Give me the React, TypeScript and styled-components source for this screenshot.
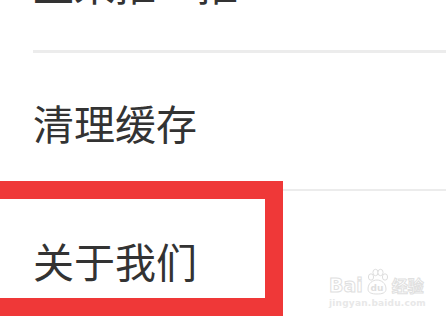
import React from "react";
import styled, { createGlobalStyle } from "styled-components";

const Global = createGlobalStyle`
  html, body { margin: 0; padding: 0; background: #ffffff; }
  body { font-family: "Noto Sans CJK SC", "Noto Sans", sans-serif; }
`;

const Page = styled.div`
  position: relative;
  width: 446px;
  height: 325px;
  overflow: hidden;
  background: #ffffff;
`;

const List = styled.div`
  display: flex;
  flex-direction: column;
  margin-top: -86px;
`;

const Row = styled.div<{ $line: number }>`
  display: flex;
  align-items: center;
  box-sizing: content-box;
  height: 134px;
  padding-top: 2px;
  margin-left: 33px;
  border-bottom: ${(p) => p.$line}px solid #ececec;
`;

const Label = styled.span`
  font-family: "Noto Sans CJK SC", "Noto Sans", sans-serif;
  font-size: 41px;
  line-height: 1;
  color: #333333;
`;

const Highlight = styled.div`
  position: absolute;
  left: -30px;
  top: 181px;
  width: 313px;
  height: 135px;
  box-sizing: border-box;
  border: 18px solid #ef3838;
  pointer-events: none;
`;

const Watermark = styled.div`
  position: absolute;
  left: 329px;
  top: 268px;
  display: flex;
  flex-direction: column;
  align-items: flex-start;
  pointer-events: none;
`;

const MarkTop = styled.div`
  display: flex;
  align-items: flex-end;
  gap: 1px;
  height: 27px;
`;

const MarkBai = styled.span`
  font-family: "DejaVu Sans", sans-serif;
  font-weight: bold;
  font-size: 19px;
  line-height: 20px;
  color: #ffffff;
  -webkit-text-stroke: 1px #e0e0e0;
`;

const MarkCn = styled.span`
  font-family: "Noto Sans CJK SC", sans-serif;
  font-weight: bold;
  font-size: 16px;
  line-height: 20px;
  color: #ffffff;
  -webkit-text-stroke: 1px #e0e0e0;
  margin-left: 1px;
`;

const MarkUrl = styled.span`
  font-family: "DejaVu Sans", sans-serif;
  font-weight: bold;
  font-size: 9px;
  line-height: 12px;
  margin-top: 2px;
  color: #e8e8e8;
  letter-spacing: 0.2px;
`;

const Paw = () => (
  <svg width="26" height="27" viewBox="0 0 26 27">
    <g fill="#ffffff" stroke="#dedede" strokeWidth="1">
      <ellipse cx="7" cy="9" rx="2.6" ry="3.2" />
      <ellipse cx="11.5" cy="4.5" rx="2.6" ry="3.2" />
      <ellipse cx="16.5" cy="4.5" rx="2.6" ry="3.2" />
      <ellipse cx="21" cy="9" rx="2.6" ry="3.2" />
      <path d="M4 21 C4 15 9 12 13 12 C17 12 22 15 22 21 C22 25 18 26 13 26 C8 26 4 25 4 21 Z" />
    </g>
    <text
      x="13"
      y="23"
      textAnchor="middle"
      fontFamily="DejaVu Sans, sans-serif"
      fontWeight="bold"
      fontSize="9"
      fill="#dedede"
    >
      du
    </text>
  </svg>
);

const items = [
  { label: "上来推一推", line: 3 },
  { label: "清理缓存", line: 2 },
  { label: "关于我们", line: 2 },
];

export default function App() {
  return (
    <Page>
      <Global />
      <List>
        {items.map((it) => (
          <Row key={it.label} $line={it.line}>
            <Label>{it.label}</Label>
          </Row>
        ))}
      </List>
      <Highlight />
      <Watermark>
        <MarkTop>
          <MarkBai>Bai</MarkBai>
          <Paw />
          <MarkCn>经验</MarkCn>
        </MarkTop>
        <MarkUrl>jingyan.baidu.com</MarkUrl>
      </Watermark>
    </Page>
  );
}
